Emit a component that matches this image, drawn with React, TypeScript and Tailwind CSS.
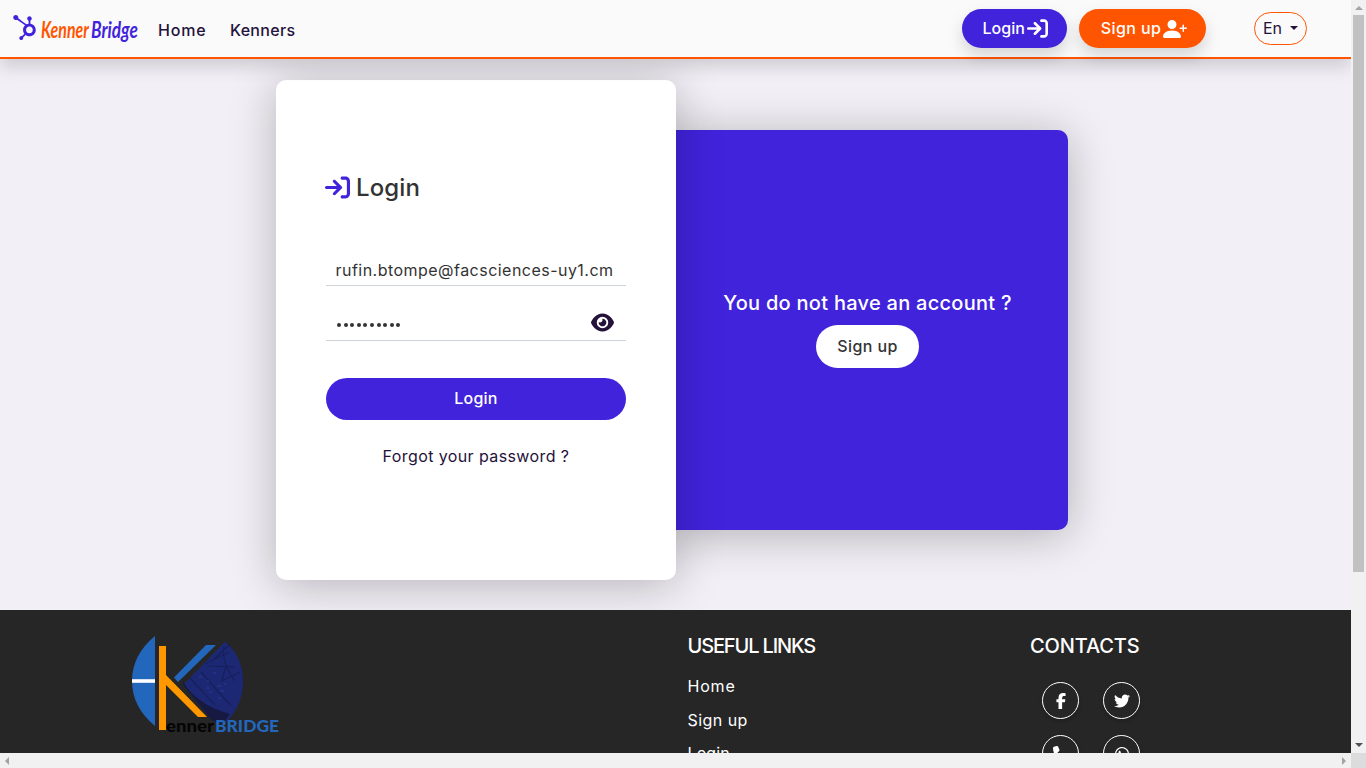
import React from "react";
import { FaHubspot, FaArrowRightToBracket, FaEye, FaFacebookF, FaTwitter, FaPhone, FaWhatsapp } from "react-icons/fa6";
import { BsPersonPlusFill } from "react-icons/bs";

function Header() {
  return (
    <header className="relative z-10 flex h-[59px] shrink-0 items-center border-b-2 border-[#ff5500] bg-[#fafafa] shadow-[0_8px_16px_rgba(0,0,0,0.15)]">
      <a className="flex h-full w-[158px] items-center pl-[12px] pb-[2px]">
        <FaHubspot className="size-[25px] text-[#4123dc]" />
        <span className="ml-[4px] mt-[3px] flex whitespace-nowrap font-['Lato'] text-[23px] font-bold italic leading-[30px]">
          <span className="w-[50px]">
            <span className="inline-block origin-left scale-x-[0.69] text-[#ff5500]">Kenner</span>
          </span>
          <span className="w-[49px]">
            <span className="inline-block origin-left scale-x-[0.75] text-[#4123dc]">Bridge</span>
          </span>
        </span>
      </a>
      <nav className="flex gap-[24px] pt-[3px] text-[16px] font-medium text-[#24123a]">
        <a className="w-[48px] whitespace-nowrap tracking-[0.8px]">Home</a>
        <a className="whitespace-nowrap tracking-[0.3px]">Kenners</a>
      </nav>
      <div className="ml-auto mr-[44px] flex items-center">
        <button className="flex h-[39px] w-[105px] items-center rounded-full bg-[#4123dc] pb-px pl-[20.5px] text-[16px] font-medium text-white shadow-[0_8px_16px_rgba(0,0,0,0.15)]">
          Login
          <FaArrowRightToBracket className="ml-[2.5px] mt-px size-[21px]" />
        </button>
        <button className="ml-[12px] flex h-[39px] w-[127px] items-center whitespace-nowrap rounded-full bg-[#ff5500] pb-px pl-[20.5px] text-[16px] font-medium text-white shadow-[0_8px_16px_rgba(0,0,0,0.15)]">
          <span className="w-[63px] tracking-[0.4px]">Sign up</span>
          <BsPersonPlusFill className="mt-px size-[24px]" />
        </button>
        <button className="ml-[48px] flex h-[33px] w-[53px] items-center rounded-full border border-[#ff5500] pb-px pl-[8px] text-[16px] text-[#24123a]">
          En
          <span className="ml-[8px] border-x-[4.5px] border-t-[4.5px] border-x-transparent border-t-[#24123a]" />
        </button>
      </div>
    </header>
  );
}

function LoginCard() {
  return (
    <section className="relative z-[1] flex h-[500px] w-[400px] flex-col rounded-[10px] bg-white px-[50px] pt-[89px] shadow-[0_5px_45px_rgba(0,0,0,0.25)]">
      <h1 className="flex h-[36px] items-center text-[24px] font-medium text-[#333]">
        <FaArrowRightToBracket className="-ml-px mr-[6px] size-[25px] text-[#4123dc]" />
        <span className="pt-[2px] tracking-[0.1px]">Login</span>
      </h1>
      <div className="mt-[50px] h-[31px] border-b border-[#ced4da] pl-[9.5px] text-[16px] leading-[30px] text-[#333]">
        <span className="whitespace-nowrap tracking-[0.47px]">rufin.btompe@facsciences-uy1.cm</span>
      </div>
      <div className="mt-[19px] flex h-[36px] items-center justify-between border-b border-[#ced4da] pl-[11px] pr-[12px] text-[#333]">
        <span className="flex gap-[2.6px] pt-[4px]" aria-label="Password">
          {Array.from({ length: 10 }, (_, i) => (
            <i key={i} className="size-[4px] rounded-full bg-[#333]" />
          ))}
        </span>
        <FaEye className="size-[23px] text-[#24123a]" />
      </div>
      <button className="mt-[37px] h-[42px] rounded-full bg-[#4123dc] pb-[2px] text-[16px] font-medium tracking-[0.2px] text-white">Login</button>
      <a className="mt-[24px] whitespace-nowrap text-center text-[16px] tracking-[0.4px] text-[#24123a]">Forgot your password ?</a>
    </section>
  );
}

function SignupCard() {
  return (
    <section className="-ml-[8px] flex h-[400px] w-[400px] flex-col items-center rounded-r-[10px] bg-[#4123dc] pr-px pt-[158px] shadow-[0_5px_45px_rgba(0,0,0,0.27)]">
      <h2 className="h-[37px] whitespace-nowrap text-[20px] font-medium leading-[30px] tracking-[0.27px] text-white">You do not have an account ?</h2>
      <button className="h-[43px] w-[103px] rounded-full bg-white pb-[2px] text-[16px] font-medium tracking-[0.4px] text-[#333]">Sign up</button>
    </section>
  );
}

function BrandMark() {
  return (
    <svg className="ml-[130px] mt-[24px] h-[102px] w-[152px] shrink-0" viewBox="130 634 152 102">
      <path d="M155 636V726Q132 707 132 681T155 636Z" fill="#2367bd" />
      <path d="M132 679.2H155V682.8H132Z" fill="#fff" />
      <path d="M225 641.5Q243 657 243 681Q243 705 227 721Q216 727 207 714L183 685Z" fill="#1c2873" />
      <path d="M183 681Q195 704 230 714L224 722Q212 724 207 714L183 685Z" fill="#161a42" />
      <path d="M205 664L229 652M207 666L235 667M224 646Q221 662 235 681M213 660L229 645M226 665L222 681L240 672M190 678L215 705M201 672L231 706" fill="none" stroke="#141d55" strokeWidth="1.2" opacity=".75" />
      <path d="M199 677h3m5 4h2m4-8h3m-10 15h3m8-2h4m-1 5h4m-6 7h3m3-14h2m-17 8h3" stroke="#2b3b91" strokeWidth="2" opacity=".55" />
      <path d="M206 645H216L178 682L174 677.5Z" fill="#2367bd" />
      <path d="M159 646H166V675L207 717H198L166 685V730H159Z" fill="#ff9800" />
      <text x="166" y="732" textLength="48" lengthAdjust="spacingAndGlyphs" fill="#050505" className="font-['Lato'] text-[17px] font-black">enner</text>
      <text x="215" y="732" textLength="64" lengthAdjust="spacingAndGlyphs" fill="#2367bd" className="font-['Lato'] text-[16px] font-black">BRIDGE</text>
    </svg>
  );
}

function SocialIcon({ children }: { children: React.ReactNode }) {
  return (
    <a className="flex size-[37px] items-center justify-center rounded-full border border-white text-[16px] text-white shadow-[0_2px_4px_rgba(0,0,0,0.2)]">
      {children}
    </a>
  );
}

function Footer() {
  return (
    <footer className="flex h-[143px] shrink-0 overflow-hidden bg-[#262626] text-white">
      <BrandMark />
      <div className="ml-[405.5px] w-[342.5px] shrink-0 pt-[21px]">
        <h3 className="whitespace-nowrap text-[20px] font-medium leading-[30px] tracking-[-1.15px]">USEFUL LINKS</h3>
        <ul className="mt-[13px] text-[16px] leading-[24px]">
          <li className="mb-[9.5px] tracking-[0.8px]">Home</li>
          <li className="mb-[9.5px] tracking-[0.45px]">Sign up</li>
          <li className="tracking-[0.1px]">Login</li>
        </ul>
      </div>
      <div className="pt-[21px]">
        <h3 className="whitespace-nowrap text-[20px] font-medium leading-[30px] tracking-[-0.12px]">CONTACTS</h3>
        <div className="ml-[12px] mt-[21px] grid w-[98px] grid-cols-[37px_37px] gap-x-[24px] gap-y-[16px]">
          <SocialIcon><FaFacebookF className="ml-px" /></SocialIcon>
          <SocialIcon><FaTwitter className="ml-px" /></SocialIcon>
          <SocialIcon><FaPhone /></SocialIcon>
          <SocialIcon><FaWhatsapp /></SocialIcon>
        </div>
      </div>
    </footer>
  );
}

export default function App() {
  return (
    <div className="grid h-[768px] w-[1366px] grid-cols-[1351px_15px] grid-rows-[753px_15px] overflow-hidden font-['Inter',sans-serif]">
      <div className="flex flex-col overflow-hidden bg-[#f2eff6]">
        <Header />
        <main className="flex h-[551px] shrink-0 items-center overflow-hidden pb-[9px] pl-[276px]">
          <LoginCard />
          <SignupCard />
        </main>
        <Footer />
      </div>
      <div className="flex flex-col items-center bg-[#f1f1f1]">
        <span className="mt-[6px] border-x-[4px] border-b-[4px] border-x-transparent border-b-[#a3a3a3]" />
        <span className="mt-[5px] h-[557px] w-[11px] bg-[#c1c1c1]" />
        <span className="mb-[6px] mt-auto border-x-[4px] border-t-[4px] border-x-transparent border-t-[#505050]" />
      </div>
      <div className="flex items-center justify-between bg-[#f1f1f1] px-[5px]">
        <span className="border-y-[4px] border-r-[4px] border-y-transparent border-r-[#a3a3a3]" />
        <span className="border-y-[4px] border-l-[4px] border-y-transparent border-l-[#a3a3a3]" />
      </div>
      <div className="bg-[#dcdcdc]" />
    </div>
  );
}
